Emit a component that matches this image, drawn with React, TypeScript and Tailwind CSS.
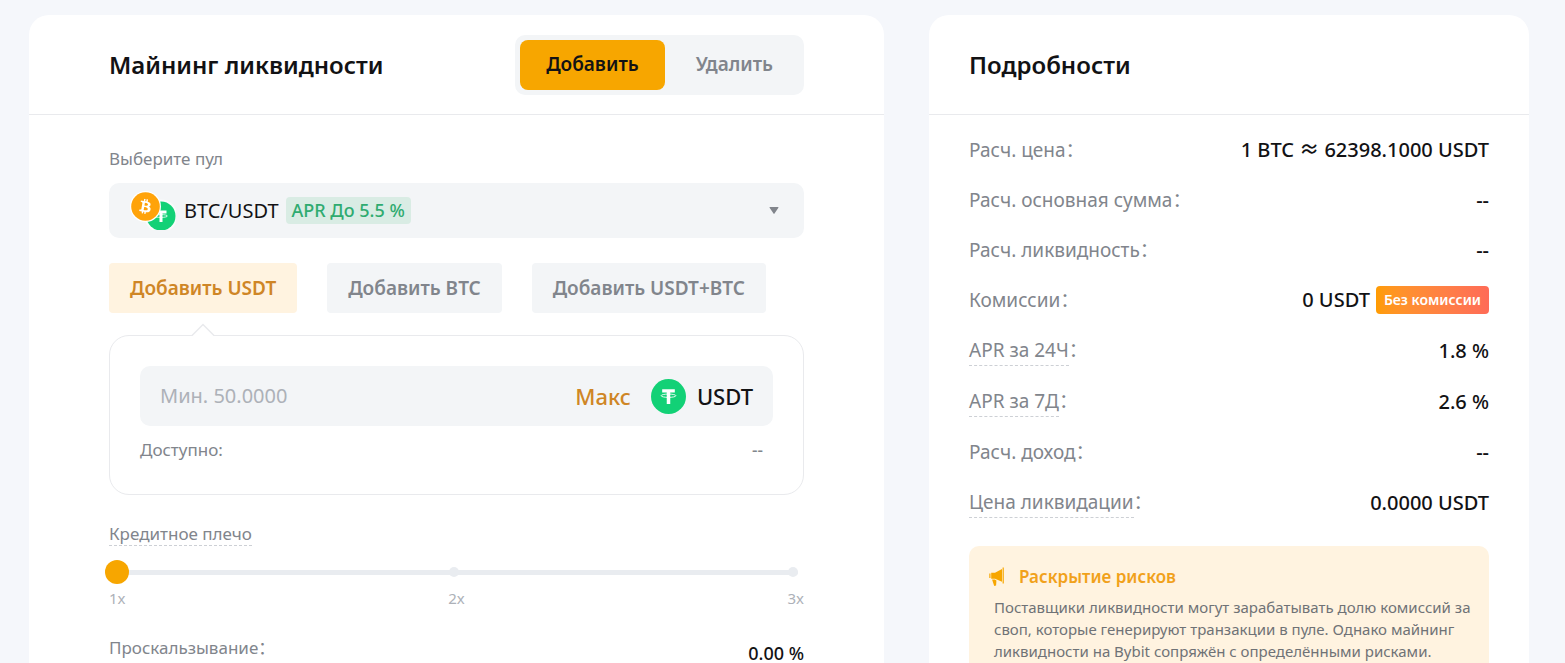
import { useState } from 'react';
import { FaBtc } from 'react-icons/fa';

type Row = { label: string; value: string; hint?: boolean; tag?: string };

const ROWS: Row[] = [
  { label: 'Расч. цена', value: '1 BTC ≈ 62398.1000 USDT' },
  { label: 'Расч. основная сумма', value: '--' },
  { label: 'Расч. ликвидность', value: '--' },
  { label: 'Комиссии', value: '0 USDT', tag: 'Без комиссии' },
  { label: 'APR за 24Ч', value: '1.8 %', hint: true },
  { label: 'APR за 7Д', value: '2.6 %', hint: true },
  { label: 'Расч. доход', value: '--' },
  { label: 'Цена ликвидации', value: '0.0000 USDT', hint: true },
];

const ASSETS = ['USDT', 'BTC', 'USDT+BTC'];

function TetherIcon({ className }: { className?: string }) {
  return (
    <svg viewBox="0 0 36 36" className={className} aria-hidden="true">
      <circle cx="18" cy="18" r="18" fill="#12d176" />
      <path d="M11.5 10.500h13v3.400h-4.700v11.800h-3.600V13.900h-4.700z" fill="#fff" />
      <ellipse cx="18" cy="17.200" rx="7.600" ry="1.700" fill="none" stroke="#fff" strokeWidth="0.9" />
    </svg>
  );
}

function PairIcon() {
  return (
    <svg viewBox="0 0 46 39" className="h-[39px] w-[46px] shrink-0" aria-hidden="true">
      <circle cx="31" cy="25" r="16.500" fill="#fff" opacity="0.6" />
      <circle cx="31" cy="25" r="14.500" fill="#12d176" />
      <path d="M25.500 19.500h11v3h-4V31h-3v-8.500h-4z" fill="#fff" />
      <ellipse cx="31" cy="25" rx="6.500" ry="1.400" fill="none" stroke="#fff" strokeWidth="0.8" />
      <circle cx="15.500" cy="15.500" r="15.500" fill="#fff" />
      <circle cx="15.500" cy="15.500" r="14.300" fill="#ffa30a" />
      <g transform="rotate(10 15.500 15.500)">
        <FaBtc x="8" y="8" size={15} color="#fff" />
      </g>
    </svg>
  );
}

function MegaphoneIcon() {
  return (
    <svg viewBox="0 0 16 20" className="h-5 w-4 shrink-0" fill="#f7a600" aria-hidden="true">
      <path d="M13.600 0.500h1.200v16h-1.200z" />
      <path d="M13 2v12.800L6 11.700H2.200V5.800H6z" />
      <path d="M0.300 6.500h1.200v4.600H0.300z" />
      <path d="M3.200 12.600h2.600l1.600 1-.3 4.900-1.900.6-2-6z" />
    </svg>
  );
}

export default function App() {
  const [mode, setMode] = useState<'add' | 'remove'>('add');
  const [asset, setAsset] = useState('USDT');
  const [amount, setAmount] = useState('');
  const [leverage, setLeverage] = useState(1);

  return (
    <div className="min-h-screen bg-[#f5f7fb] pt-[15px] pl-[29px] pr-9 grid grid-cols-[57fr_40fr] gap-[45px] font-['Noto_Sans','Noto_Sans_CJK_SC',sans-serif] text-[#121214]">
      {/* Form */}
      <section className="bg-white rounded-t-[20px]">
        <header className="h-[100px] px-20 flex items-center justify-between border-b border-[#e9eaed]">
          <h1 className="text-2xl font-semibold">Майнинг ликвидности</h1>
          <div className="flex gap-[5px] p-[5px] bg-[#f3f5f7] rounded-[10px] text-[19px] font-semibold">
            <button
              onClick={() => setMode('add')}
              className={`h-[50px] px-[26px] rounded-lg ${mode === 'add' ? 'bg-[#f7a600]' : 'text-[#81858c]'}`}
            >
              Добавить
            </button>
            <button
              onClick={() => setMode('remove')}
              className={`h-[50px] px-[26px] rounded-lg ${mode === 'remove' ? 'bg-[#f7a600]' : 'text-[#81858c]'}`}
            >
              Удалить
            </button>
          </div>
        </header>

        <div className="px-20 pt-8">
          <label htmlFor="pool" className="block text-[17px] leading-6 text-[#81858c]">Выберите пул</label>
          <div className="mt-3 h-[55px] px-[21px] flex items-center bg-[#f3f5f7] rounded-[10px]">
            <PairIcon />
            <select id="pool" className="ml-2 appearance-none field-sizing-content bg-transparent text-xl outline-none">
              <option>BTC/USDT</option>
            </select>
            <span className="ml-[7px] px-1.5 rounded bg-[#d9ece4] text-lg leading-[27px] font-medium text-[#2fab70]">APR До 5.5 %</span>
            <svg viewBox="0 0 10 8" className="ml-auto mr-1 h-2 w-2.5" fill="#81858c" aria-hidden="true">
              <path d="M1 0h8q.8 0 .4.700L5.500 6.500q-.5.800-1 0L.6.700Q.2 0 1 0z" />
            </svg>
          </div>

          <div className="mt-[25px] flex gap-[30px] text-[19px] font-semibold">
            {ASSETS.map((a) => (
              <button
                key={a}
                onClick={() => setAsset(a)}
                className={`relative h-[50px] px-[21px] rounded ${asset === a ? 'bg-[#fff3e0] text-[#cf8626]' : 'bg-[#f3f5f7] text-[#81858c]'}`}
              >
                Добавить {a}
                {asset === a && (
                  <svg viewBox="0 0 24 13" className="absolute top-[60px] left-1/2 -ml-3 z-10 h-[13px] w-6" aria-hidden="true">
                    <path d="M0.500 13L12 1.500 23.500 13" fill="#fff" stroke="#e9eaed" strokeWidth="1.500" />
                  </svg>
                )}
              </button>
            ))}
          </div>

          <div className="mt-[22px] h-40 px-[30px] pt-[30px] border border-[#e9eaed] rounded-[20px]">
            <div className="h-[60px] px-5 flex items-center bg-[#f3f5f7] rounded-[10px] font-medium">
              <input
                aria-label="Сумма"
                value={amount}
                onChange={(e) => setAmount(e.target.value)}
                placeholder="Мин. 50.0000"
                className="flex-1 min-w-0 bg-transparent text-xl font-normal placeholder:text-[#adb1b8] outline-none"
              />
              <button className="text-[22px] text-[#cf8626]">Макс</button>
              <TetherIcon className="ml-5 mr-[11px] size-[35px]" />
              <span className="text-[22px]">USDT</span>
            </div>
            <div className="mt-3 pr-2.5 flex justify-between text-[17px] leading-6 text-[#81858c]">
              <span>Доступно:</span>
              <span className="font-medium">--</span>
            </div>
          </div>

          <label htmlFor="leverage" className="mt-7 inline-block border-b border-dashed border-[#cdd0d5] text-[17px] leading-[22px] text-[#81858c]">
            Кредитное плечо
          </label>
          <div className="mt-3.5 grid items-center">
            <div className="col-start-1 row-start-1 mr-1.5 flex items-center justify-between bg-[#e9ecf0] h-[5px] rounded-full">
              <i className="size-2.5 rounded-full bg-[#e9ecf0]" />
              <i className="size-2.5 rounded-full bg-[#e9ecf0]" />
              <i className="size-2.5 rounded-full bg-[#e9ecf0]" />
            </div>
            <input
              id="leverage"
              type="range"
              min={1}
              max={3}
              value={leverage}
              onChange={(e) => setLeverage(Number(e.target.value))}
              className="col-start-1 row-start-1 -ml-1 h-6 appearance-none bg-transparent [&::-webkit-slider-thumb]:appearance-none [&::-webkit-slider-thumb]:size-6 [&::-webkit-slider-thumb]:rounded-full [&::-webkit-slider-thumb]:bg-[#f7a600]"
            />
          </div>
          <div className="mt-1 flex justify-between text-[15px] leading-5 text-[#adb1b8]">
            <span>1x</span>
            <span>2x</span>
            <span>3x</span>
          </div>

          <div className="mt-7 flex justify-between text-[17px] leading-6">
            <span className="text-[#81858c]">Проскальзывание：</span>
            <span className="pt-2 text-lg leading-[18px] font-medium">0.00 %</span>
          </div>
        </div>
      </section>

      {/* Details */}
      <section className="bg-white rounded-t-[20px] flex flex-col">
        <header className="h-[100px] px-10 flex items-center border-b border-[#e9eaed]">
          <h2 className="text-2xl font-semibold">Подробности</h2>
        </header>

        <div className="flex-1 px-10 pt-5 flex flex-col">
          <dl className="space-y-5 text-xl leading-[30px]">
            {ROWS.map((r) => (
              <div key={r.label} className="flex justify-between">
                <dt className="flex text-[19px] leading-[30px] text-[#81858c]">
                  <span className={r.hint ? 'border-b border-dashed border-[#cdd0d5]' : ''}>{r.label}</span>：
                </dt>
                <dd className="flex items-center font-medium">
                  {r.value}
                  {r.tag && (
                    <span className="ml-1.5 px-2 rounded bg-linear-to-r from-[#ff9c00] to-[#ff6b57] text-sm leading-7 font-semibold text-white">{r.tag}</span>
                  )}
                </dd>
              </div>
            ))}
          </dl>

          <div className="mt-7 flex-1 pl-5 pr-3 pt-[19px] bg-[#fff3e0] rounded-t-[10px]">
            <h3 className="flex items-center gap-3.5 text-[17px] leading-6 font-semibold text-[#f1a11b]">
              <MegaphoneIcon />
              Раскрытие рисков
            </h3>
            <p className="mt-[7px] pl-[5px] text-[15px] leading-[22px] text-[#6f7276]">
              Поставщики ликвидности могут зарабатывать долю комиссий за своп, которые генерируют транзакции в пуле. Однако майнинг ликвидности на Bybit сопряжён с определёнными рисками.
            </p>
          </div>
        </div>
      </section>
    </div>
  );
}
